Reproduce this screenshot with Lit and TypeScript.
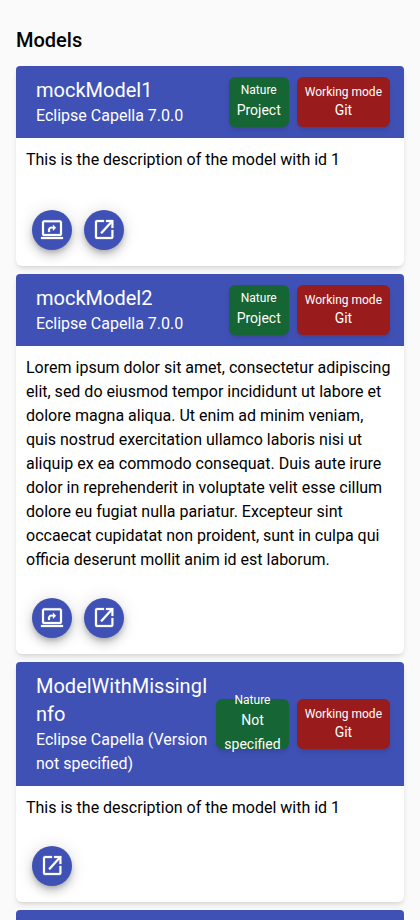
import { LitElement, html, css } from "lit";
import { customElement, property } from "lit/decorators.js";

interface Model {
  name: string;
  tool: string;
  nature: string;
  description: string;
  canRequestSession: boolean;
}

const SHORT = "This is the description of the model with id 1";
const LOREM =
  "Lorem ipsum dolor sit amet, consectetur adipiscing elit, sed do eiusmod tempor incididunt ut labore et dolore magna aliqua. Ut enim ad minim veniam, quis nostrud exercitation ullamco laboris nisi ut aliquip ex ea commodo consequat. Duis aute irure dolor in reprehenderit in voluptate velit esse cillum dolore eu fugiat nulla pariatur. Excepteur sint occaecat cupidatat non proident, sunt in culpa qui officia deserunt mollit anim id est laborum.";

const MODELS: Model[] = [
  { name: "mockModel1", tool: "Eclipse Capella 7.0.0", nature: "Project", description: SHORT, canRequestSession: true },
  { name: "mockModel2", tool: "Eclipse Capella 7.0.0", nature: "Project", description: LOREM, canRequestSession: true },
  { name: "ModelWithMissingInfo", tool: "Eclipse Capella (Version not specified)", nature: "Not specified", description: SHORT, canRequestSession: false },
];

@customElement("model-card")
export class ModelCard extends LitElement {
  @property({ attribute: false }) model!: Model;

  static styles = css`
    :host {
      display: flex;
      flex-direction: column;
      box-sizing: border-box;
      min-height: 200px;
      border-radius: 6px;
      background: #fff;
      box-shadow: 0 4px 6px -1px rgba(0, 0, 0, 0.1), 0 2px 4px -2px rgba(0, 0, 0, 0.1);
    }
    .header {
      display: flex;
      align-items: center;
      justify-content: space-between;
      padding: 10px 14px 10px 20px;
      border-radius: 4px 4px 0 0;
      background: #3f51b5;
      color: #fff;
    }
    .title {
      min-width: 0;
      max-width: 172px;
    }
    .name {
      font-size: 20px;
      line-height: 28px;
      word-break: break-all;
    }
    .tool {
      line-height: 24px;
    }
    .badges {
      display: flex;
      gap: 8px;
      flex-shrink: 0;
    }
    .badge {
      display: flex;
      flex-direction: column;
      align-items: center;
      justify-content: center;
      box-sizing: border-box;
      height: 50px;
      padding: 0 8px;
      border-radius: 6px;
      font-size: 14px;
      line-height: 24px;
      text-align: center;
      box-shadow: 0 4px 6px -1px rgba(0, 0, 0, 0.1), 0 2px 4px -2px rgba(0, 0, 0, 0.1);
    }
    .nature { background: #166534; }
    .mode {
      background: #991b1b;
      line-height: 20px;
    }
    .label {
      font-size: 12px;
      line-height: 16px;
    }
    .value { max-width: 56.6px; }
    .description {
      flex: 1;
      padding: 10px;
      line-height: 24px;
    }
    .actions {
      display: flex;
      gap: 12px;
      padding: 16px;
    }
    .action {
      display: flex;
      align-items: center;
      justify-content: center;
      width: 40px;
      height: 40px;
      padding: 0;
      border: 0;
      border-radius: 50%;
      background: #3f51b5;
      color: #fff;
      box-shadow: 0 3px 5px -1px rgba(0, 0, 0, 0.2), 0 6px 10px rgba(0, 0, 0, 0.14), 0 1px 18px rgba(0, 0, 0, 0.12);
    }
    svg {
      width: 24px;
      height: 24px;
      fill: currentColor;
      stroke: currentColor;
      stroke-width: 0.25;
    }
  `;

  render() {
    const m = this.model;
    return html`
      <div class="header">
        <div class="title">
          <div class="name">${m.name}</div>
          <div class="tool">${m.tool}</div>
        </div>
        <div class="badges">
          <div class="badge nature"><span class="label">Nature</span><span class="value">${m.nature}</span></div>
          <div class="badge mode"><span class="label">Working mode</span><span class="value">Git</span></div>
        </div>
      </div>
      <div class="description">${m.description}</div>
      <div class="actions">
        ${m.canRequestSession
          ? html`<button class="action" aria-label="Request session">
              <svg viewBox="0 0 24 24"><path d="M1 21v-2h22v2zM4 18q-.825 0-1.412-.587T2 16V4.3q0-.825.588-1.412T4 2.3h16q.825 0 1.413.588T22 4.3v11.7q0 .825-.587 1.413T20 18zm0-2h16V4.3H4zM8 14v-2.2q0-1.25.875-2.125T11 8.8h2V6.7L16 9.7 13 12.7V10.6h-2q-.425 0-.712.288T10 11.6V14z" /></svg>
            </button>`
          : null}
        <button class="action" aria-label="Open model">
          <svg viewBox="0 0 24 24"><path d="M5 21q-.825 0-1.412-.587T3 19V4q0-.825.588-1.412T5 2h7v2H5v15h14.4v-7h2v7q0 .825-.587 1.413T19.4 21zm4.9-5.1-1.5-1.5L18 4H14V2h7.4v8h-2V5.6z" /></svg>
        </button>
      </div>
    `;
  }
}

@customElement("app-root")
export class AppRoot extends LitElement {
  static styles = css`
    :host {
      display: block;
      box-sizing: border-box;
      height: 920px;
      overflow: hidden;
      padding: 26px 16px 0;
      background: #fafafa;
      color: #000;
      font: 400 16px/24px Roboto, sans-serif;
    }
    .heading {
      margin: 0 0 12px;
      font-size: 20px;
      line-height: 28px;
      font-weight: 500;
    }
    .list {
      display: flex;
      flex-direction: column;
      gap: 8px;
    }
    .next {
      height: 72px;
      border-radius: 4px 4px 0 0;
      background: #3f51b5;
    }
  `;

  render() {
    return html`
      <h2 class="heading">Models</h2>
      <div class="list">
        ${MODELS.map((m) => html`<model-card .model=${m}></model-card>`)}
        <div class="next"></div>
      </div>
    `;
  }
}
